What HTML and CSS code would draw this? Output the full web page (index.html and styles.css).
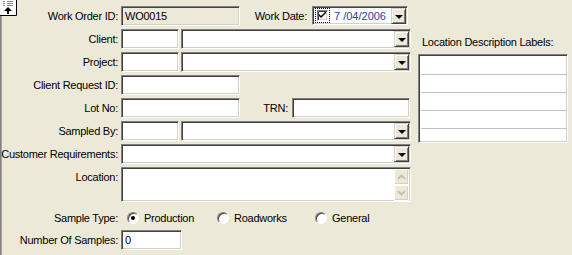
FILE: index.html
```html
<!DOCTYPE html>
<html>
<head>
    <title>Work Order</title>
    <link rel="stylesheet" href="styles.css">
</head>
<body>
    <div class="panel">
        <div class="toggle">
            <svg width="17" height="16" viewBox="0 0 17 16">
                <rect x="0" y="0" width="16" height="15" fill="#fff"/>
                <path d="M16.5 0V15.5H0" fill="none" stroke="#000"/>
                <path d="M3 1.5h2M7 1.5h6M3 3.5h2M7 3.5h6M3 5.5h2M7 5.5h6" stroke="#8a8a8a" stroke-width="1"/>
                <path d="M8 7L4 11H7V14H9V11H12Z" fill="#000"/>
            </svg>
        </div>

        <div class="form-area">
            <div class="row">
                <label class="lbl">Work Order ID:</label>
                <div class="box box-disabled w-119">WO0015</div>
                <label class="lbl lbl-date">Work Date:</label>
                <div class="box datepick">
                    <span class="focus"><span class="check">
                        <svg width="7" height="7" viewBox="0 0 7 7"><path d="M0 2L0 4L2 6L7 1L7 -1L2 4Z" fill="#000"/></svg>
                    </span></span>
                    <span class="date-text">7 /04/2006</span>
                    <span class="drop"><span class="arrow"></span></span>
                </div>
            </div>

            <div class="row">
                <label class="lbl">Client:</label>
                <div class="box w-58"></div>
                <div class="box combo w-230"><span class="drop"><span class="arrow"></span></span></div>
            </div>

            <div class="row">
                <label class="lbl">Project:</label>
                <div class="box w-58"></div>
                <div class="box combo w-230"><span class="drop"><span class="arrow"></span></span></div>
            </div>

            <div class="row">
                <label class="lbl">Client Request ID:</label>
                <div class="box w-119"></div>
            </div>

            <div class="row">
                <label class="lbl">Lot No:</label>
                <div class="box w-119"></div>
                <label class="lbl lbl-trn">TRN:</label>
                <div class="box w-118"></div>
            </div>

            <div class="row">
                <label class="lbl">Sampled By:</label>
                <div class="box w-58"></div>
                <div class="box combo w-230"><span class="drop"><span class="arrow"></span></span></div>
            </div>

            <div class="row">
                <label class="lbl">Customer Requirements:</label>
                <div class="box combo w-290"><span class="drop"><span class="arrow"></span></span></div>
            </div>

            <div class="row row-tall">
                <label class="lbl lbl-top">Location:</label>
                <div class="box memo w-290">
                    <div class="scrollbar">
                        <span class="sbtn">
                            <svg width="9" height="6" viewBox="0 0 9 6"><path d="M1 5L4.5 1.5L8 5" fill="none" stroke="#c5c2b2" stroke-width="2"/></svg>
                        </span>
                        <span class="sbtn">
                            <svg width="9" height="6" viewBox="0 0 9 6"><path d="M1 1L4.5 4.5L8 1" fill="none" stroke="#c5c2b2" stroke-width="2"/></svg>
                        </span>
                    </div>
                </div>
            </div>

            <div class="row row-radio">
                <label class="lbl">Sample Type:</label>
                <div class="options">
                    <span class="opt"><span class="radio radio-on"></span>Production</span>
                    <span class="opt"><span class="radio"></span>Roadworks</span>
                    <span class="opt"><span class="radio"></span>General</span>
                </div>
            </div>

            <div class="row">
                <label class="lbl">Number Of Samples:</label>
                <div class="box w-61">0</div>
            </div>
        </div>

        <div class="labels-area">
            <div class="labels-title">Location Description Labels:</div>
            <div class="box listbox">
                <div class="list-row"></div>
                <div class="list-row"></div>
                <div class="list-row"></div>
                <div class="list-row"></div>
                <div class="list-row"></div>
            </div>
        </div>
    </div>
</body>
</html>
```

FILE: styles.css
```css
body {
    margin: 0;
    background-color: #ece9d8;
    font-family: "Liberation Sans", Arial, sans-serif;
    font-size: 11px;
    letter-spacing: -0.25px;
    color: #000;
}

.panel {
    position: relative;
    display: flex;
    height: 255px;
    border-left: 1px solid #808080;
    box-shadow: inset 1px 0 #aca899;
    box-sizing: border-box;
}

/* collapse button in the corner */
.toggle {
    position: absolute;
    top: 0;
    left: -1px;
    width: 17px;
    height: 16px;
}

.toggle svg {
    display: block;
}

.form-area {
    width: 411px;
    padding-top: 6px;
    display: flex;
    flex-direction: column;
    gap: 3px;
}

.row {
    display: flex;
    align-items: center;
    height: 20px;
}

.row-tall {
    height: 35px;
    align-items: flex-start;
}

.row-radio {
    margin-top: 3px;
}

.row-radio + .row {
    margin-top: -1px;
}

.lbl {
    width: 117px;
    padding-right: 3px;
    text-align: right;
    white-space: nowrap;
    flex-shrink: 0;
}

.lbl-top {
    padding-top: 4px;
}

.lbl-date {
    width: 67px;
    padding-right: 5px;
}

.lbl-trn {
    width: 48px;
    padding-right: 4px;
}

/* sunken edit box */
.box {
    position: relative;
    height: 20px;
    box-sizing: border-box;
    background-color: #fff;
    border-top: 1px solid #808080;
    border-left: 1px solid #808080;
    border-right: 1px solid #fff;
    border-bottom: 1px solid #fff;
    box-shadow: inset 1px 1px #404040, inset -1px -1px #d4d0c8;
    padding: 3px 4px 0 3px;
    white-space: nowrap;
    flex-shrink: 0;
}

.box-disabled {
    background-color: #ece9d8;
    color: #000;
}

.box + .box {
    margin-left: 2px;
}

.w-58 { width: 58px; }
.w-61 { width: 61px; }
.w-118 { width: 118px; }
.w-119 { width: 119px; }
.w-230 { width: 230px; }
.w-290 { width: 290px; }

/* dropdown button */
.drop {
    position: absolute;
    top: 1px;
    right: 1px;
    width: 15px;
    height: 16px;
    box-sizing: border-box;
    background-color: #ece9d8;
    border-top: 1px solid #d4d0c8;
    border-left: 1px solid #d4d0c8;
    border-right: 1px solid #404040;
    border-bottom: 1px solid #404040;
    box-shadow: inset 1px 1px #fff, inset -1px -1px #808080;
}

.arrow {
    position: absolute;
    left: 3px;
    top: 6px;
    border-left: 4px solid transparent;
    border-right: 4px solid transparent;
    border-top: 4px solid #000;
}

.datepick {
    width: 96px;
    height: 19px;
    margin-top: -1px;
    display: flex;
    align-items: center;
    padding: 0 0 0 2px;
}

.focus {
    width: 13px;
    height: 13px;
    border: 1px dotted #000;
    display: flex;
    align-items: center;
    justify-content: center;
}

.check {
    width: 11px;
    height: 11px;
    box-sizing: border-box;
    border-top: 1px solid #808080;
    border-left: 1px solid #808080;
    border-right: 1px solid #fff;
    border-bottom: 1px solid #fff;
    box-shadow: inset 1px 1px #404040, inset -1px -1px #d4d0c8;
    background-color: #fff;
    display: flex;
    align-items: center;
    justify-content: center;
}

.check svg {
    display: block;
}

.date-text {
    margin-left: 4px;
    color: #1c3f9c;
    letter-spacing: 0;
}

.memo {
    height: 35px;
}

.scrollbar {
    position: absolute;
    top: 1px;
    right: 1px;
    width: 15px;
    display: flex;
    flex-direction: column;
}

.sbtn {
    width: 15px;
    height: 16px;
    box-sizing: border-box;
    background-color: #ece9d8;
    border: 1px solid #fff;
    box-shadow: inset -1px -1px #d4d0c8;
    display: flex;
    align-items: center;
    justify-content: center;
}

.sbtn svg {
    display: block;
}

.options {
    display: flex;
    padding-left: 6px;
}

.opt {
    display: flex;
    align-items: center;
}

.opt:nth-child(1) { width: 90px; }
.opt:nth-child(2) { width: 98px; }

.radio {
    width: 12px;
    height: 12px;
    box-sizing: border-box;
    border-radius: 50%;
    border: 1px solid;
    border-color: #808080 #fff #fff #808080;
    background-color: #fff;
    box-shadow: inset 1px 1px #404040;
    margin-right: 5px;
    position: relative;
}

.radio-on::after {
    content: "";
    position: absolute;
    left: 3px;
    top: 3px;
    width: 4px;
    height: 4px;
    border-radius: 50%;
    background-color: #000;
}

.labels-area {
    margin-left: 6px;
    padding-top: 36px;
    display: flex;
    flex-direction: column;
}

.labels-title {
    padding-left: 4px;
    height: 18px;
}

.listbox {
    width: 150px;
    height: 89px;
    padding: 2px 0 0 2px;
}

.list-row {
    height: 17px;
    border-bottom: 1px solid #c0c0c0;
}

.list-row:last-child {
    border-bottom: none;
}
```
